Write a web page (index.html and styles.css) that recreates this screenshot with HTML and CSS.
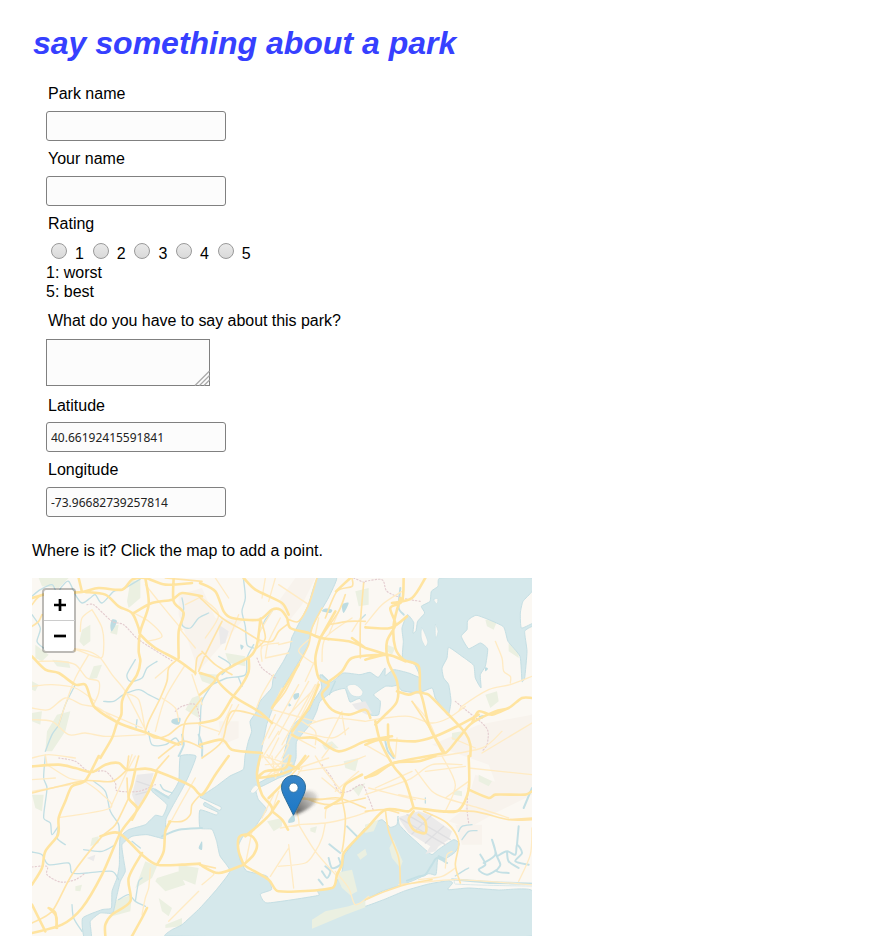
FILE: index.html
```html
<!DOCTYPE html>
<html lang="en">
<head>
<meta charset="utf-8">
<title>say something about a park</title>
<link rel="stylesheet" href="styles.css">
</head>
<body>
<h1>say something about a park</h1>
<form class="form">
  <label for="park">Park name</label>
  <input class="text" id="park" type="text">
  <label for="name">Your name</label>
  <input class="text" id="name" type="text">
  <label>Rating</label>
  <div class="ratings">
    <span class="rating"><input type="radio" name="r"><span>1</span></span>
    <span class="rating"><input type="radio" name="r"><span>2</span></span>
    <span class="rating"><input type="radio" name="r"><span>3</span></span>
    <span class="rating"><input type="radio" name="r"><span>4</span></span>
    <span class="rating"><input type="radio" name="r"><span>5</span></span>
  </div>
  <div class="hint">1: worst<br>5: best</div>
  <label class="say" for="say">What do you have to say about this park?</label>
  <div class="area"><textarea id="say"></textarea><svg class="grip" width="16" height="16" viewBox="0 0 16 16"><path d="M1 15.5 15.5 1M5.500 15.500 15.500 5.500M10 15.500 15.500 10"/></svg></div>
  <label class="lat" for="lat">Latitude</label>
  <input class="text" id="lat" type="text" value="40.66192415591841">
  <label for="lng">Longitude</label>
  <input class="text" id="lng" type="text" value="-73.96682739257814">
</form>
<p class="where">Where is it? Click the map to add a point.</p>
<div class="map">
<svg class="tiles" viewBox="0 0 1500 1074" preserveAspectRatio="none">
  <!-- built-up areas -->
  <g class="urban">
    <path d="M440 50 510 30 550 120 630 130 500 280 440 110ZM790 0 850 0 810 80 770 130 740 70ZM1340 440 1500 410 1500 650 1400 640 1370 560 1200 500ZM1330 590 1500 650 1400 700 1310 750 1250 730 1300 690ZM560 430 620 430 620 480 570 500ZM1270 740 1350 740 1350 800 1290 800ZM1090 310 1160 320 1160 345 1090 335Z"/>
  </g>
  <!-- parks -->
  <g class="park">
    <path d="M295 10 325 5 325 60 290 90 285 70ZM150 155 175 140 175 190 155 205 142 190ZM240 145 260 140 255 170 235 165ZM185 265 210 260 195 300 170 305ZM75 410 115 400 100 460 60 520 40 520 45 460ZM20 0 110 0 80 30 30 25ZM10 200 50 230 30 250 10 240ZM0 310 20 320 10 340 0 335ZM60 245 110 250 115 270 75 265ZM0 405 30 400 25 440 0 430ZM480 360 505 350 500 420 460 395ZM580 225 640 235 640 265 590 255ZM970 40 1010 30 1010 80 980 85ZM500 285 560 290 540 320 510 310ZM1360 125 1395 130 1385 155 1365 145ZM1430 195 1460 225 1460 240 1430 220ZM1360 350 1395 340 1400 370 1375 390ZM1260 465 1290 460 1280 490 1260 485ZM1065 200 1090 210 1080 230 1065 220ZM870 500 900 490 920 510 880 515Z"/>
    <path d="M0 650 35 650 30 700 10 690ZM180 780 200 775 200 795 175 805ZM375 900 440 880 460 920 400 940 370 910ZM340 850 375 865 360 900 310 930ZM240 970 300 950 295 1000 240 1015ZM400 1040 450 1020 450 1045 400 1050ZM440 860 500 870 490 920 440 900ZM130 925 150 920 145 940 130 938ZM705 730 750 720 750 745 725 760ZM835 750 855 745 850 765 835 760ZM935 550 980 540 970 580 940 570ZM1340 590 1380 610 1370 625 1340 610ZM1265 635 1290 640 1290 655 1265 650ZM960 630 1000 615 980 655ZM380 960 420 990 410 1015 390 1000Z"/>
  </g>
  <!-- water -->
  <g class="water">
    <path d="M856 0H914L889 60 854 120 834 165 829 200 804 245 774 295 739 350 719 400 704 440 694 490 684 540 676 590 678 615 708 600 744 590 756 530 766 485 782 442 830 400 844 370 869 330 864 290 898 312 934 285 984 290 1014 283 1039 298 1059 270 1060 293 1085 275 1130 285 1164 298 1148 260 1112 240 1114 190 1110 150 1126 110 1145 133 1143 165 1152 158 1157 130 1178 105 1168 85 1194 70 1198 40 1218 25 1224 0H1500V40L1473 70 1465 105 1468 150 1500 137V145L1478 160 1485 220 1478 300 1470 310 1464 235 1428 190 1413 145 1335 112 1307 128 1305 155 1288 175 1310 212 1345 195 1367 213 1360 265 1345 290 1347 330 1330 300 1325 262 1290 235 1250 208 1245 240 1230 270 1235 300 1250 320 1257 370 1249 412 1235 395 1210 360 1200 330 1160 345 1110 338 1097 322 1080 325 1060 325 1025 350 1045 370 1040 410 1014 410 984 362 954 372 939 332 904 340 864 370 854 400 834 440 794 490 792 540 776 585 740 600 700 620 672 635 679 664 704 694 684 724 664 754 634 774 619 804 624 844 644 879 704 894 719 934 685 948 705 975 860 952 855 935 900 930 930 880 938 830 974 784 999 750 1049 725 1075 748 1095 740 1098 714 1102 740 1130 770 1180 815 1200 830 1220 814 1265 785 1282 797 1270 822 1240 842 1218 835 1212 890 1190 887 1145 907 1105 922 1050 940 999 967V985L1060 963 1120 938 1190 918 1250 908 1262 915 1248 935 1310 930 1400 936 1500 938V1074H400L420 1055 450 1040 504 990 554 934 594 879 564 834 554 790 540 754 504 750V696L552 711 558 703 516 683 519 673 562 697 567 687 504 658V655L524 644 554 624 594 594 634 574 639 534 649 490 659 460 654 430 674 400 684 370 719 330 724 300 754 250 774 210 779 180 804 130 829 80Z"/>
    <path d="M445 534H492L470 594 450 634 422 684 402 724 400 770 395 782 345 770 300 775 270 800 275 845 280 880 265 910 253 960 242 1005 205 1005 175 1030 178 1074H155L152 1020 210 995 238 990 240 940 255 900 262 860 264 780 290 755 340 740 370 712 392 715 405 680 360 640 362 630 410 655 440 610Z"/>
  </g>
  <g class="land">
    <path d="M945 325 970 320 992 340 985 355 960 352ZM1170 150 1187 190 1180 205 1168 180ZM1210 140 1218 160 1211 180ZM1205 65 1217 62 1215 78ZM655 640 670 622 680 630 665 645ZM1270 904 1370 910 1500 916V924L1270 918Z"/>
  </g>
  <g class="park">
    <path d="M910 885 960 875 976 940 955 952 930 930ZM840 1025 880 1000 950 985 1000 968V988L940 1010 840 1052ZM1085 785 1095 810 1112 850 1105 870 1080 840 1072 810ZM975 830 1000 812 1005 830 985 845ZM999 740 1040 725 1025 760 999 765Z"/>
  </g>
  <path class="airport" d="M1098 718 1160 700 1190 710 1260 760 1250 785 1220 805 1210 820 1180 828 1195 805 1130 765ZM315 590 365 585 350 640 315 690 300 650ZM960 378 1000 370 1020 405 1005 410 970 392ZM560 140 590 160 580 195 565 200ZM165 840 190 830 185 850Z"/>
  <path class="grid" d="M1105 722 1240 800M1125 710 1255 785M1140 768 1200 710M1180 795 1235 745M315 610 360 625M312 650 350 640"/>
  <!-- creeks and channels -->
  <g class="creek">
    <path d="M0 55 25 35 60 20 75 45 90 25 110 10 130 50 150 75 175 60 190 50 210 75 245 40 270 35 330 0M0 110 25 150 15 190 35 210M310 245 285 290 295 310 330 300 345 270 375 250M215 370 245 370 275 350 320 335 350 350 380 365M130 320 100 380 80 440 60 470 40 520M315 425 312 450M350 460 360 500 400 500 430 480 445 500"/>
    <path d="M450 60 455 90 450 140 475 150 500 120 530 105M634 0 640 60 630 100 640 145 645 200 665 210M720 100 700 125 690 150M560 235 595 260 570 290M540 320 510 370 505 430 500 500M540 320 585 300 640 290 645 240 665 200M620 300 630 325M870 290 890 310M892 350 910 310"/>
    <path d="M40 534 35 600 45 630 35 720 55 735 60 770 80 745 75 780 100 800M0 822 30 830 50 860 110 855 120 885 165 885 240 880 260 905M185 610 220 640 235 700 260 740 260 780M155 815 210 820 250 800M260 965 290 950 310 970 340 985M310 970 320 910 330 900M120 980 125 1020 150 1060M300 790 325 810"/>
    <path d="M385 620 395 635 420 645M980 130 1000 110M1280 760 1290 745 1320 740M1290 785 1310 760 1335 758M1180 660V675M1270 894 1300 875 1310 870"/>
  </g>
  <g class="channel">
    <path d="M1125 908 1160 895 1180 890 1200 860 1215 840 1245 855M1220 835 1240 845M1260 904 1350 912 1380 915 1500 917M1345 830 1360 860 1340 875 1365 890 1395 875M1355 855 1390 830 1380 785 1395 835 1405 860 1395 880 1430 885M1395 835 1425 820 1450 830 1455 800 1470 825 1450 850 1490 860M1425 820 1430 850 1460 870M1455 800 1460 745M1475 690 1500 630M1060 490 1068 520 1085 540"/>
    <path d="M370 635 410 660M390 775 440 755 510 750M450 470 455 500 440 534M500 470 510 500 510 534M1105 30 1100 90 1115 110M892 799 925 825M945 745 975 775M870 880 885 900 895 880 880 865M890 840 900 870 925 860 920 840M860 905 872 920"/>
  </g>
  <g class="creek fill">
    <path d="M240 125 255 130 240 160 235 145ZM420 425 445 420 440 440 420 435ZM784 350 800 345 800 358 788 365ZM770 375 778 382 770 385ZM930 80 950 75 935 105ZM878 92 900 95 895 105 870 100ZM625 200 635 205 628 215ZM770 725 785 710 788 730 770 735ZM1340 415 1355 412 1350 422ZM1360 268 1368 272 1360 280ZM500 810 510 790 510 815Z"/>
  </g>
  <!-- boundaries -->
  <path class="border" d="M165 80 185 80 240 130 275 140 320 185 420 248M430 400 450 385 490 380 505 430M675 240 690 270 730 300M80 540 130 550 170 580 220 580 250 615 255 638 320 640 370 620M0 867 45 865 45 890 85 912 130 905 160 885M1000 10 1050 5 1065 40 1110 60 1165 70M1270 370 1300 395 1350 435 1368 460 1365 500 1350 520M870 560 900 600 920 640 950 640 990 620 1010 660 1025 700M1310 610 1305 690 1310 735M965 0 1000 15"/>
  <!-- local roads -->
  <g class="minor">
    <path d="M180 95 150 120 145 160M180 95 210 150 215 210 205 240 120 210 130 220M110 210 170 220 205 240 240 290 280 340 340 455M170 230 130 300 100 380 80 440M0 325 60 320 130 330 190 370M20 250 80 250 130 260 165 300 200 310 200 345 185 380M0 425 60 430 110 470 160 465 220 475 340 470M0 390 50 395 100 360 150 380 200 390 260 435M340 20 400 95 450 155M305 105 350 130 390 175 345 190M460 80 500 60M445 155 490 210M435 245 370 300M460 260 400 360 370 460M280 345 320 365 340 460M0 540 50 530 130 540M180 385 330 450M390 360 430 390 440 430M480 290 510 380"/>
    <path d="M510 60 560 110 520 180M550 0 590 60M700 0 690 60M730 0 710 70M740 20 830 80M620 110 600 160 580 215M720 100 680 170 690 210M745 120 710 190 700 240M740 195 690 205 690 250M740 200 780 190M725 290 690 350 670 400M700 240 770 225M860 120 850 170M960 120 880 180 870 250M830 185 800 220 850 260M920 100 890 170M985 120 960 160M600 380 560 470M500 440 560 460M620 380 580 450M720 395 850 430M700 420 770 460M850 245 820 310M800 320 710 480M750 330 720 390M830 310 740 470M850 320 750 500M860 310 765 500M840 340 770 410M730 410 690 500M810 430 850 460 850 500M775 470 850 510M880 500 930 400M830 440 900 420 1000 430M800 460 900 480 950 450M900 500 870 540M690 540 740 460M710 540 740 480M730 540 760 500M750 540 770 500M930 410 940 470M1000 140 1050 80 1110 40M1390 190 1410 240 1415 280 1435 295 1435 315M1280 400 1290 385 1370 335 1435 320 1500 295M1140 370 1190 430 1220 500M1000 430 1060 420 1130 415 1200 435 1250 420 1300 385M1350 525 1500 435M1190 540 1350 510 1410 460M1095 480 1090 540M1260 480 1330 510M1000 500 1070 540"/>
    <path d="M0 640 60 630 115 620M45 560 110 600 155 608M155 608 200 640 235 690 85 718M235 690 280 590M280 590 300 530M40 530 45 560M310 534 280 590M355 870 350 930 340 960 330 1010M410 1030 440 1000 500 940M420 725 450 670 490 600M540 880 545 890 510 920M0 605 70 600M690 534 760 560 700 600M720 534 730 600M740 640 720 700M810 570 760 650M750 560 730 600M700 560 780 555M690 530 740 590M705 530 755 580M700 600 770 530M815 660 920 665M880 720 885 690 930 665M795 740 880 735 950 720 1010 700M880 735 870 780 850 820 820 855 740 865M800 740 850 820 915 895M795 700 800 740 770 745M770 800 785 930M770 810 715 895M745 750 800 740M850 534 880 580 930 640M870 600 930 650M800 580 930 560 1000 534M800 570 890 540M910 640 980 580M1000 650 1130 605 1200 560 1290 560M1030 630 1140 580M1150 575 1200 640 1240 660 1340 690 1430 720M1230 534 1270 620 1240 700M1240 660 1310 610M1300 565 1180 580M1000 650 1090 620M1310 570 1500 590M1100 650 1180 665M1010 630 1150 665M660 760 640 860M725 650 690 720M910 880 950 930 970 980 1010 955M1460 910 1495 830 1500 750M1100 920 1200 910 1280 905 1500 920M1240 870 1245 830 1260 820M1270 870 1230 895 1160 905"/>
  </g>
  <!-- arterial roads -->
  <g class="major thin">
    <path d="M0 145 20 130 30 110M0 80 30 50 100 50 150 40M400 0 510 10M510 360 460 430 450 500M340 460 370 480 410 470 450 440 510 435M340 460 350 430 385 360 405 310 410 270 435 245M380 540 450 490 510 510M490 290 495 240 510 225M500 55 570 120 630 155 680 185 720 190 740 160 765 140M500 280 520 230 570 130M510 220 550 260 600 290M510 540 570 490 600 400 700 420M675 210 700 180 685 120M770 125 800 130 830 80 855 0M880 120 915 40 960 25 960 0M995 15 985 140 985 240M870 90 840 150 830 200 800 260 760 340 720 390M840 170 890 185M865 180 920 100 940 50M1000 130 950 130 890 140M0 645 60 630 160 608 240 610 285 575M285 575 290 534M320 534 310 570M410 534 370 580M285 600 290 660 315 690M290 660 250 740 210 775 120 890 60 1000 0 1035M55 995 75 1020 70 1050M410 730 450 730 475 710 480 680 505 650M770 660 860 665 920 660 1000 690M815 660 890 680 1000 660M930 664 940 720 935 790 930 820M1000 700 1060 695 1100 705M770 600 830 534M1220 700 1325 700 1430 725 1500 725M1175 700 1245 735 1280 790 1270 860 1285 915M1060 695 1070 760 1100 840 1105 920M504 860 550 870M1000 965 1060 940 1120 920 1200 905M1435 725 1500 720M1140 370 1200 460 1240 525"/>
  </g>
  <g class="major">
    <path d="M0 60 60 45 150 42 200 30 270 35 300 5 340 0 400 20 480 15M150 42 140 0M160 42 220 50 260 85 300 105 320 150 325 170 370 210 435 245 490 285M340 0 350 80 325 160 320 220 325 250 315 290 285 335 270 370 268 410 255 435 240 480 205 540M305 105 360 75 420 65 450 45 510 55M425 0 425 70 455 105 440 160 440 240M0 235 40 275 80 285 130 320 160 320 175 360 190 390 260 435 330 460 370 475 440 500M504 15 550 40 575 100 600 120 680 125 720 95 745 95 765 120 775 150 830 165 865 180 950 190 1000 210M635 0 670 35 750 75 770 110M685 125 675 200 655 235 600 265 555 300 605 355 680 400 720 435M504 285 550 305 504 350M650 240 650 280 630 320 600 360 560 420 504 435M504 500 570 485 600 515 690 525M865 180 850 240 860 300 890 320 870 350 900 395 950 410 1000 395 1015 420M885 315 930 280 960 240 1050 230M1000 210 960 180M865 180 910 100M912 40 955 0M720 390 800 260M780 470 800 480 850 480 920 520 1000 490 1080 475M780 460 830 390 860 320M1115 0 1110 70 1075 90 1090 140 1065 190 1068 250 1095 310 1095 370 1060 410 1030 440M1180 0 1140 60 1080 75M1105 60 1085 140 1090 210 1115 245 1160 265 1165 340 1190 350 1240 400 1300 465 1315 500 1315 534M1000 148 1075 150 1125 115M1000 210 1065 230M1000 245 1065 230 1120 250M1095 340 1130 350 1165 345 1190 440 1220 500 1240 525 1280 480 1320 435 1390 400 1430 390 1470 360 1500 360M1320 435 1340 400 1380 410 1430 390M1030 430 1045 490 1085 565 1120 610 1145 690M1000 500 1045 485 1150 490 1210 475 1275 445 1340 410M1240 525 1190 534 1085 555 1030 590 1000 598M1068 440 1070 500 1085 534M990 590 940 620 928 660 880 690"/>
    <path d="M0 565 80 560 130 570 180 582 220 560 260 555 285 575 340 572 375 580 480 625 510 650 550 590 590 534M200 534 160 608 120 625 100 670 80 720 78 770 40 820 30 870 0 920M310 575 300 620 290 660 315 690 300 725M375 580 350 640 310 705 265 765 210 890 150 990 90 1040 0 1065M0 980 40 1060M75 1050 70 1005 50 990M205 775 260 765 330 830 375 860 450 860 504 857M330 825 290 900 295 970 240 1010 220 1040 220 1074M375 860 395 820 400 760 415 730M300 1074 330 1020 345 990M504 860 560 885 635 860M635 860 650 870 710 905 740 940 900 930 915 890 930 860 935 825 980 775 1010 745 1060 695 1130 700 1145 690 1230 700 1280 697 1310 635 1310 534M635 860 620 820 620 780 635 770 660 775 675 800 665 830 635 860M640 775 720 700 690 650 675 590 685 534M720 700 750 725 768 755M675 600 700 580 760 570 775 534M720 700 740 670M1310 635 1370 660 1390 650 1480 650 1500 640M1145 700 1130 725 1145 755 1180 765 1180 730 1160 710M1000 600 1085 555 1160 550 1210 534M680 600 740 590 790 570 820 534M710 660 750 620M770 560 800 572"/>
  </g>
</svg>
<svg class="pin" width="60" height="46" viewBox="0 0 60 46">
  <defs>
    <linearGradient id="pinFill" x1="0" y1="0" x2="0" y2="1"><stop offset="0" stop-color="#3885c7"/><stop offset="1" stop-color="#1b78c8"/></linearGradient>
    <linearGradient id="shade" gradientUnits="userSpaceOnUse" x1="14" y1="38" x2="36" y2="18"><stop offset="0" stop-color="#222" stop-opacity=".75"/><stop offset="1" stop-color="#444" stop-opacity=".12"/></linearGradient>
    <filter id="soft" x="-30%" y="-30%" width="160%" height="160%"><feGaussianBlur stdDeviation="1.500"/></filter>
  </defs>
  <path d="M13 40 18 21Q25 13 33 17 40 22 32 30Q24 37 13 40Z" fill="url(#shade)" filter="url(#soft)"/>
  <path d="M12.500.5C5.700.5.5 5.800.5 12.200c0 4.500 2 7.800 4.100 12.200l7.900 15.800 7.900-15.800c2.100-4.400 4.100-7.700 4.100-12.200C24.500 5.800 19.300.5 12.500.5Z" fill="url(#pinFill)" stroke="#2e6c97"/>
  <circle cx="12.500" cy="12.700" r="4.600" fill="#fff" stroke="#2e6c97" stroke-width=".8"/>
</svg>
<div class="zoom">
  <button type="button" aria-label="Zoom in"><svg width="12" height="12" viewBox="0 0 12 12"><path d="M6 0V12M0 6H12"/></svg></button>
  <button type="button" aria-label="Zoom out"><svg width="12" height="12" viewBox="0 0 12 12"><path d="M0 6H12"/></svg></button>
</div>
</div>
<script src="map.js"></script>
</body>
</html>
```
FILE: map.js
```js
// Rounds the map's polylines into smooth curves through the same points.
function readPoints(sub) {
  const points = [];
  let x = 0, y = 0;
  for (const [, cmd, args] of sub.matchAll(/([MLHV])([^MLHVZ]*)/g)) {
    const n = args.trim().split(/\s+/).map(Number);
    if (cmd === 'H') { x = n[0]; points.push([x, y]); }
    else if (cmd === 'V') { y = n[0]; points.push([x, y]); }
    else for (let i = 0; i < n.length; i += 2) { x = n[i]; y = n[i + 1]; points.push([x, y]); }
  }
  return points;
}
function smooth(sub, k) {
  const p = readPoints(sub), closed = sub.includes('Z'), n = p.length;
  const at = i => closed ? p[(i + n) % n] : p[Math.max(0, Math.min(n - 1, i))];
  let d = 'M' + p[0];
  for (let i = 0; i < (closed ? n : n - 1); i++) {
    const a = at(i - 1), b = at(i), c = at(i + 1), e = at(i + 2);
    const len = Math.hypot(c[0] - b[0], c[1] - b[1]);
    const handle = (u, v) => {
      const dx = v[0] - u[0], dy = v[1] - u[1], m = Math.hypot(dx, dy) || 1;
      const s = Math.min(m * k, len * .35) / m;
      return [dx * s, dy * s];
    };
    const h = handle(a, c), g = handle(b, e);
    d += `C${b[0] + h[0]} ${b[1] + h[1]} ${c[0] - g[0]} ${c[1] - g[1]} ${c[0]} ${c[1]}`;
  }
  return d + (closed ? 'Z' : '');
}
document.querySelectorAll('.water path,.land path,.creek path,.channel path,.minor path,.major path,.border').forEach(el => {
  const k = el.parentNode.classList.contains('water') ? .08 : .15;
  el.setAttribute('d', el.getAttribute('d').match(/M[^M]+/g).map(s => smooth(s, k)).join(''));
});
```
FILE: styles.css
```css
* { box-sizing: border-box; }
body { margin: 0; padding: 24px 32px 0; background: #fff; color: #000; font: 16px/18px "Liberation Sans", Arial, sans-serif; overflow: hidden; }
h1 { margin: 0 0 22px 1px; font-size: 32px; line-height: 38px; font-style: italic; font-weight: bold; color: #3640ff; }
.form { display: flex; flex-direction: column; align-items: flex-start; padding-left: 14px; }
label { margin: 0 0 8px 2px; padding-top: 1px; height: 19px; }
.say { padding-top: 0; letter-spacing: -.04px; }
.lat { padding-top: 2px; }
.text { width: 180px; height: 30px; margin: 0 0 8px; padding: 1px 4px; border: 1px solid #808080; border-radius: 3px; background: #fcfcfc; color: #222; font: 12px "Noto Sans", sans-serif; }
.ratings { display: flex; height: 22px; padding: 2px 0 0 5px; }
.rating { display: flex; width: 41.7px; }
.rating input { appearance: none; width: 16px; height: 16px; margin: 0 8px 0 0; border: 1px solid #999; border-radius: 50%; background: linear-gradient(#e9e9e9, #d9d9d9); }
.rating span { line-height: 21px; }
.hint { line-height: 19px; margin-bottom: 11px; }
.area { position: relative; width: 164px; height: 47px; margin-bottom: 9px; }
textarea { display: block; width: 164px; height: 47px; margin: 0; border: 1px solid #808080; border-radius: 0; background: #fcfcfc; resize: none; }
.grip { position: absolute; right: 0; bottom: 0; fill: none; stroke: #aaa; stroke-width: 1.300; }
.where { margin: 17px 0 18px; letter-spacing: -.02px; }
.map { position: relative; width: 500px; height: 358px; overflow: hidden; background: #fbf8f3; }
.tiles { display: block; width: 500px; height: 358px; }
.tiles path { stroke-linejoin: round; stroke-linecap: round; }
.urban { fill: #f8f3ed; }
.park { fill: #ebf0e1; }
.water { fill: #d5e8eb; stroke: #c5dfe4; stroke-width: 3; }
.land { fill: #fbf8f3; stroke: #c9e1e5; stroke-width: 2; }
.airport { fill: #ebeaea; }
.grid { fill: none; stroke: #dfdfe1; stroke-width: 4; }
.creek { fill: none; stroke: #c2dfe4; stroke-width: 4; }
.creek.fill { fill: #bddce2; stroke: none; }
.channel { fill: none; stroke: #c4e0e5; stroke-width: 6; }
.border { fill: none; stroke: #e4cdd0; stroke-width: 3.500; stroke-dasharray: 4 6; }
.minor { fill: none; stroke: #ffebc4; stroke-width: 4; }
.major { fill: none; stroke: #ffe4a0; stroke-width: 7.800; }
.major.thin { stroke: #ffe4a8; stroke-width: 5; }
.pin { position: absolute; left: 249px; top: 197px; }
.zoom { position: absolute; left: 10px; top: 10px; width: 34px; height: 65px; border: 2px solid rgba(0,0,0,.25); border-radius: 4px; background: #fff; background-clip: padding-box; }
.zoom button { display: flex; align-items: center; justify-content: center; width: 31px; height: 31px; padding: 0; border: 0; border-bottom: 1px solid #ccc; background: none; }
.zoom button:last-child { height: 30px; border-bottom: 0; }
.zoom path { fill: none; stroke: #000; stroke-width: 2.700; }
```
